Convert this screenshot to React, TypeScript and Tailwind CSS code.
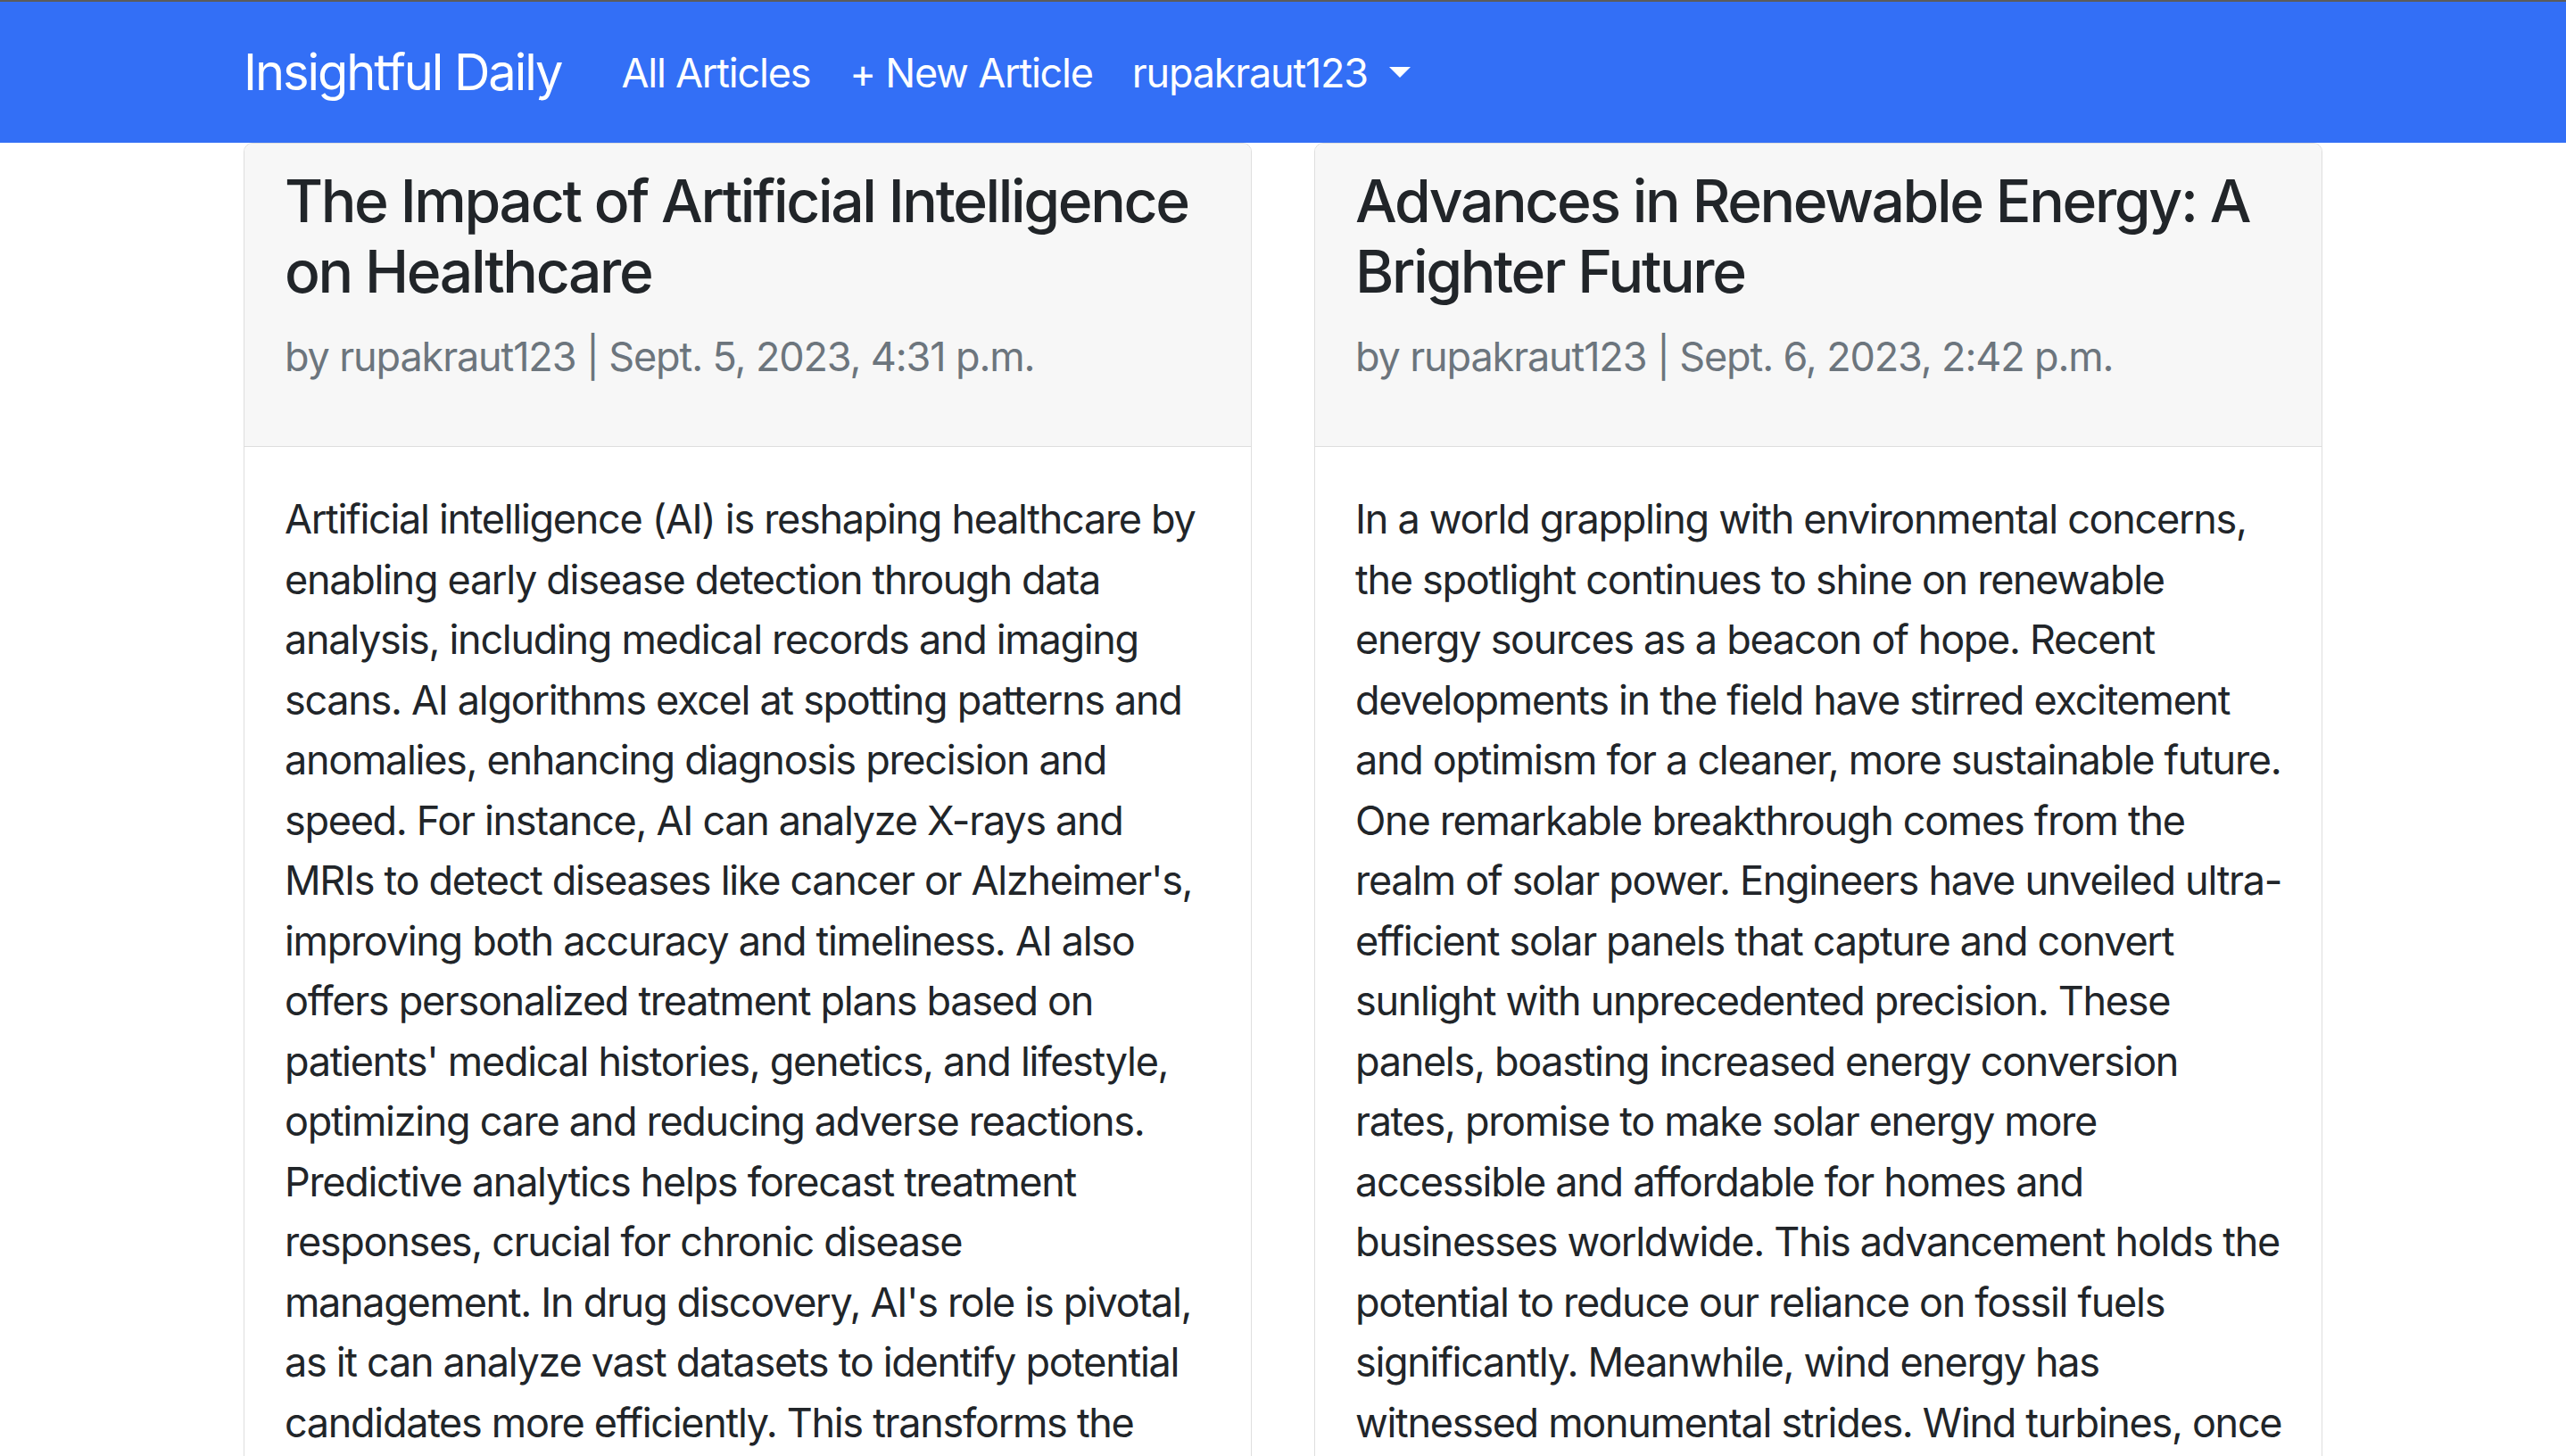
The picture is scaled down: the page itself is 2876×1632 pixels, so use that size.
import React from 'react'

interface Article {
  id: number
  title: string
  author: string
  date: string
  // body kept as the lines it wraps to in the card
  lines: string[]
}

const articles: Article[] = [
  {
    id: 1,
    title: 'The Impact of Artificial Intelligence on Healthcare',
    author: 'rupakraut123',
    date: 'Sept. 5, 2023, 4:31 p.m.',
    lines: [
      'Artificial intelligence (AI) is reshaping healthcare by',
      'enabling early disease detection through data',
      'analysis, including medical records and imaging',
      'scans. AI algorithms excel at spotting patterns and',
      'anomalies, enhancing diagnosis precision and',
      'speed. For instance, AI can analyze X-rays and',
      "MRIs to detect diseases like cancer or Alzheimer's,",
      'improving both accuracy and timeliness. AI also',
      'offers personalized treatment plans based on',
      "patients' medical histories, genetics, and lifestyle,",
      'optimizing care and reducing adverse reactions.',
      'Predictive analytics helps forecast treatment',
      'responses, crucial for chronic disease',
      "management. In drug discovery, AI's role is pivotal,",
      'as it can analyze vast datasets to identify potential',
      'candidates more efficiently. This transforms the',
      'pharmaceutical industry by reducing the time and',
      'cost of bringing new treatments to market.',
    ],
  },
  {
    id: 2,
    title: 'Advances in Renewable Energy: A Brighter Future',
    author: 'rupakraut123',
    date: 'Sept. 6, 2023, 2:42 p.m.',
    lines: [
      'In a world grappling with environmental concerns,',
      'the spotlight continues to shine on renewable',
      'energy sources as a beacon of hope. Recent',
      'developments in the field have stirred excitement',
      'and optimism for a cleaner, more sustainable future.',
      'One remarkable breakthrough comes from the',
      'realm of solar power. Engineers have unveiled ultra-',
      'efficient solar panels that capture and convert',
      'sunlight with unprecedented precision. These',
      'panels, boasting increased energy conversion',
      'rates, promise to make solar energy more',
      'accessible and affordable for homes and',
      'businesses worldwide. This advancement holds the',
      'potential to reduce our reliance on fossil fuels',
      'significantly. Meanwhile, wind energy has',
      'witnessed monumental strides. Wind turbines, once',
      'limited to open plains, are now being installed',
      'offshore at a record scale.',
    ],
  },
]

function ArticleCard({ article }: { article: Article }) {
  return (
    <article className="overflow-hidden rounded-[10px] border border-[#dedede] bg-white">
      <div className="border-b border-[#dedede] bg-[#f7f7f7] px-[45px] pt-[25px] pb-[22px]">
        <h4 className="mb-[22px] text-[66px] leading-[79px] font-medium tracking-[-0.036em] text-[#212529]">
          {article.title}
        </h4>
        <p className="mb-[45px] text-[45px] leading-[67px] tracking-[-0.025em] text-[#6c757d]">
          by {article.author} | {article.date}
        </p>
      </div>
      <div className="px-[45px] pt-[47px] pb-[45px]">
        <p className="text-[45px] leading-[67.5px] tracking-[-0.029em] text-[#212529]">
          {article.lines.map((line, i) => (
            <span key={i} className="block whitespace-nowrap">
              {line}
            </span>
          ))}
        </p>
      </div>
    </article>
  )
}

export default function App() {
  return (
    <div className="min-h-screen bg-white font-['Inter','Liberation_Sans',sans-serif]">
      <nav className="border-t-2 border-[#5b5b5b] bg-[#336ff6]">
        <div className="mx-auto flex w-[2330px] items-center py-[22px]">
          <a
            href="#"
            className="mr-[45px] py-[15px] text-[56px] leading-[84px] tracking-[-0.037em] text-white"
          >
            Insightful Daily
          </a>
          <div className="flex items-center text-[45px] leading-[67px] tracking-[-0.027em] text-white">
            <a href="#" className="px-[22px] py-[8px]">
              All Articles
            </a>
            <a href="#" className="px-[22px] py-[8px]">
              + New Article
            </a>
            <button type="button" className="flex items-center px-[22px] py-[8px]">
              rupakraut123
              <span className="ml-[24px] h-0 w-0 border-x-[12px] border-t-[12px] border-x-transparent border-t-white" />
            </button>
          </div>
        </div>
      </nav>

      <main className="mx-auto grid w-[2330px] grid-cols-2 gap-[70px]">
        {articles.map((a) => (
          <ArticleCard key={a.id} article={a} />
        ))}
      </main>
    </div>
  )
}
